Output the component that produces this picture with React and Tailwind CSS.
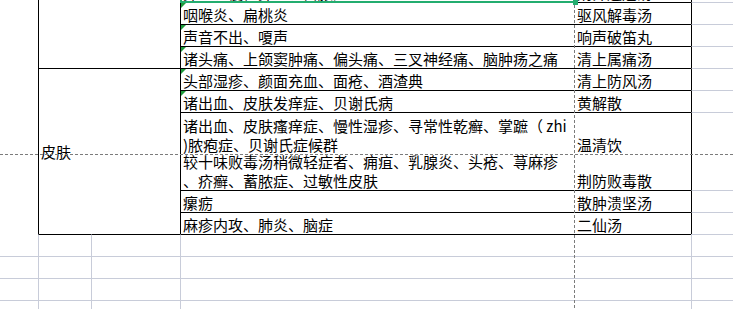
import React from "react";

// 表格右半部分（D、E、F 列），按行排列
const rows = [
  {
    h: "h-[22px]",
    d: ["鼻炎、慢性鼻炎、蓄脓症"],
    e: "荆芥连翘汤",
    dCls: "border-l border-black",
    eCls: "",
    fCls: "border-l border-black",
    selected: true,
  },
  {
    h: "h-[22px]",
    d: ["咽喉炎、扁桃炎"],
    e: "驱风解毒汤",
    mark: true,
    dCls: "border-t border-l border-black",
    eCls: "border-t border-black",
    fCls: "border-t border-l border-t-[#c8ccd9] border-l-black",
  },
  {
    h: "h-[22px]",
    d: ["声音不出、嗄声"],
    e: "响声破笛丸",
    mark: true,
    dCls: "border-t border-l border-black",
    eCls: "border-t border-black",
    fCls: "border-t border-l border-t-[#c8ccd9] border-l-black",
  },
  {
    h: "h-[22px]",
    d: ["诸头痛、上颌窦肿痛、偏头痛、三叉神经痛、脑肿疡之痛"],
    e: "清上属痛汤",
    mark: true,
    dCls: "border-t border-l border-black",
    eCls: "border-t border-black",
    fCls: "border-t border-l border-t-[#c8ccd9] border-l-black",
  },
  {
    h: "h-[22px]",
    d: ["头部湿疹、颜面充血、面疮、酒渣典"],
    e: "清上防风汤",
    mark: true,
    dCls: "border-t border-l border-black",
    eCls: "border-t border-black",
    fCls: "border-t border-l border-t-[#c8ccd9] border-l-black",
  },
  {
    h: "h-[22px]",
    d: ["诸出血、皮肤发痒症、贝谢氏病"],
    e: "黄解散",
    mark: true,
    dCls: "border-t border-l border-black",
    eCls: "border-t border-black",
    fCls: "border-t border-l border-t-[#c8ccd9] border-l-black",
  },
  {
    h: "h-[42px]",
    d: ["诸出血、皮肤瘙痒症、慢性湿疹、寻常性乾癣、掌蹠（ zhi", ")脓疱症、贝谢氏症候群"],
    e: "温清饮",
    dCls: "border-t border-l border-black",
    eCls: "border-t border-black",
    fCls: "border-t border-l border-t-[#c8ccd9] border-l-black",
  },
  {
    h: "h-[36px]",
    d: ["较十味败毒汤稍微轻症者、痈疽、乳腺炎、头疮、荨麻疹", "、疥癣、蓄脓症、过敏性皮肤"],
    e: "荆防败毒散",
    dCls: "border-l border-black",
    eCls: "",
    fCls: "border-l border-black",
  },
  {
    h: "h-[22px]",
    d: ["瘰疬"],
    e: "散肿溃坚汤",
    dCls: "border-t border-l border-black",
    eCls: "border-t border-black",
    fCls: "border-t border-l border-t-[#c8ccd9] border-l-black",
  },
  {
    h: "h-[22px]",
    d: ["麻疹内攻、肺炎、脑症"],
    e: "二仙汤",
    dCls: "border-t border-l border-black",
    eCls: "border-t border-black",
    fCls: "border-t border-l border-t-[#c8ccd9] border-l-black",
  },
  {
    h: "h-[22px]",
    d: [],
    e: "",
    dCls: "border-t border-l border-t-black border-l-[#c8ccd9]",
    eCls: "border-t border-black",
    fCls: "border-t border-l border-[#c8ccd9]",
  },
  {
    h: "h-[22px]",
    d: [],
    e: "",
    dCls: "border-t border-l border-[#c8ccd9]",
    eCls: "border-t border-[#c8ccd9]",
    fCls: "border-t border-l border-[#c8ccd9]",
  },
  {
    h: "h-[22px]",
    d: [],
    e: "",
    dCls: "border-t border-l border-[#c8ccd9]",
    eCls: "border-t border-[#c8ccd9]",
    fCls: "border-t border-l border-[#c8ccd9]",
  },
  {
    h: "h-[22px]",
    d: [],
    e: "",
    dCls: "border-t border-l border-[#c8ccd9]",
    eCls: "border-t border-[#c8ccd9]",
    fCls: "border-t border-l border-[#c8ccd9]",
  },
];

const bcRows = [
  "border-t border-l border-t-black border-l-[#c8ccd9]",
  "border-t border-l border-[#c8ccd9]",
  "border-t border-l border-[#c8ccd9]",
  "border-t border-l border-[#c8ccd9]",
];

function Row({ row }) {
  return (
    <div className={`flex ${row.h}`}>
      <div className={`relative w-[394px] shrink-0 flex items-end pl-[2px] ${row.dCls}`}>
        {row.mark && (
          <span className="absolute left-0 top-0 w-0 h-0 border-t-[5px] border-r-[5px] border-t-[#1f9b3c] border-r-transparent" />
        )}
        <div className="whitespace-nowrap">
          {row.d.map((t, i) => (
            <div key={i}>{t}</div>
          ))}
        </div>
        {row.selected && (
          <>
            <div className="pointer-events-none absolute -left-px -right-px -bottom-px top-[-3px] z-10 border-2 border-[#23ad6f]" />
            <div className="pointer-events-none absolute right-[-4px] bottom-[-3px] z-10 w-[5px] h-[5px] bg-[#23ad6f]" />
          </>
        )}
      </div>
      <div className={`w-[117px] shrink-0 flex items-end pl-[3px] ${row.eCls}`}>
        <div className="whitespace-nowrap">{row.e}</div>
      </div>
      <div className={`flex-1 ${row.fCls}`} />
    </div>
  );
}

export default function App() {
  return (
    <div className="relative w-[733px] h-[309px] overflow-hidden bg-white text-black font-['Noto_Sans_CJK_SC',sans-serif] text-[15px] leading-[19px]">
      <div className="flex -mt-5">
        {/* A 列 */}
        <div className="w-[38px] shrink-0 flex flex-col">
          <div className="h-[254px]" />
          <div className="h-[22px]" />
          <div className="h-[22px] border-t border-[#c8ccd9]" />
          <div className="h-[22px] border-t border-[#c8ccd9]" />
          <div className="h-[22px] border-t border-[#c8ccd9]" />
        </div>

        {/* B、C 列（合并单元格） */}
        <div className="w-[142px] shrink-0 flex flex-col">
          <div className="h-[88px] border-l border-black" />
          <div className="h-[166px] border-t border-l border-black flex items-center pl-[2px] pb-[1px]">
            皮肤
          </div>
          {bcRows.map((cls, i) => (
            <div key={i} className="flex h-[22px]">
              <div className={`w-[53px] shrink-0 ${cls}`} />
              <div className={`flex-1 ${cls}`} />
            </div>
          ))}
        </div>

        {/* D、E、F 列 */}
        <div className="flex-1 flex flex-col">
          {rows.map((row, i) => (
            <Row key={i} row={row} />
          ))}
        </div>
      </div>

      {/* 分页线 */}
      <div className="pointer-events-none absolute left-0 right-0 top-[154px] h-px bg-[image:repeating-linear-gradient(to_right,#7b7b7b_0_3px,transparent_3px_5px)]" />
      <div className="pointer-events-none absolute top-0 bottom-0 left-[574px] w-px bg-[image:repeating-linear-gradient(to_bottom,#7b7b7b_0_3px,transparent_3px_5px)]" />
    </div>
  );
}
